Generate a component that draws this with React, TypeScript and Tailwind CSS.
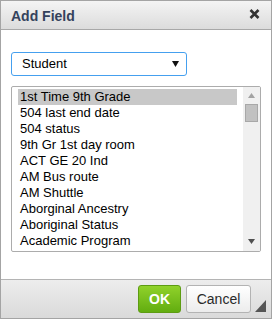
const fields = [
  '1st Time 9th Grade',
  '504 last end date',
  '504 status',
  '9th Gr 1st day room',
  'ACT GE 20 Ind',
  'AM Bus route',
  'AM Shuttle',
  'Aborginal Ancestry',
  'Aboriginal Status',
  'Academic Program',
];

export default function App() {
  return (
    <div className="relative w-[272px] h-[319px] border border-[#a4a4a4] bg-white flex flex-col font-['Liberation_Sans',Arial,sans-serif]">
      {/* title bar */}
      <div className="h-[29px] shrink-0 flex items-center justify-between pl-[10px] pr-[11px] border-b border-[#a8a8a8] bg-gradient-to-b from-[#f4f4f4] to-[#dcdcdc]">
        <span className="text-[14px] font-bold text-[#34425c] leading-none pt-[2px]">Add Field</span>
        <svg width="11" height="10" viewBox="0 0 11 10" className="mb-[2px]">
          <path d="M1.5 1 L9.5 9 M9.5 1 L1.5 9" stroke="#333" strokeWidth="2.6" />
        </svg>
      </div>

      {/* body */}
      <div className="flex-1 px-[10px] pt-[22px]">
        <div className="w-[176px] h-[24px] border border-[#45a0ef] rounded-[3px] flex items-center justify-between pl-[10px] pr-[7px]">
          <span className="text-[13px] text-black">Student</span>
          <svg width="7" height="6" viewBox="0 0 7 6">
            <path d="M0 0 H7 L3.5 6 Z" fill="#111" />
          </svg>
        </div>

        <div className="mt-[10px] w-[250px] h-[166px] border border-[#acacac] rounded-[2px] flex overflow-hidden">
          <div className="flex-1 pl-[6px] pr-[6px] pt-[2px]">
            {fields.map((f, i) => (
              <div
                key={f}
                className={`h-[16px] pl-[2px] text-[13px] leading-[16px] text-black whitespace-nowrap ${i === 0 ? 'bg-[#c8c8c8]' : ''}`}
              >
                {f}
              </div>
            ))}
          </div>
          <div className="w-[17px] bg-[#f0f0f0] flex flex-col items-center">
            <svg width="7" height="5" viewBox="0 0 7 5" className="mt-[6px]">
              <path d="M0 5 H7 L3.5 0 Z" fill="#a3a3a3" />
            </svg>
            <div className="mt-[6px] w-[13px] h-[18px] bg-[#c1c1c1] border border-[#a8a8a8]" />
            <div className="flex-1" />
            <svg width="7" height="5" viewBox="0 0 7 5" className="mb-[7px]">
              <path d="M0 0 H7 L3.5 5 Z" fill="#505050" />
            </svg>
          </div>
        </div>
      </div>

      {/* footer */}
      <div className="h-[39px] shrink-0 border-t border-[#b4b4b4] bg-gradient-to-b from-[#ededed] to-[#dadada] flex justify-end items-start pt-[5px] pr-[20px] gap-[5px]">
        <button className="w-[43px] h-[28px] rounded-[3px] border border-[#5d9c12] bg-gradient-to-b from-[#90d22a] to-[#62ad0f] text-white text-[14px] font-bold">
          OK
        </button>
        <button className="w-[65px] h-[28px] rounded-[3px] border border-[#b3b3b3] bg-gradient-to-b from-[#ffffff] to-[#ececec] text-[#2a2a2a] text-[14px]">
          Cancel
        </button>
      </div>

      {/* resize grip */}
      <svg width="11" height="12" viewBox="0 0 11 12" className="absolute right-[5px] bottom-[6px]">
        <path d="M11 0 V12 H0 Z" fill="#555" />
      </svg>
    </div>
  );
}
